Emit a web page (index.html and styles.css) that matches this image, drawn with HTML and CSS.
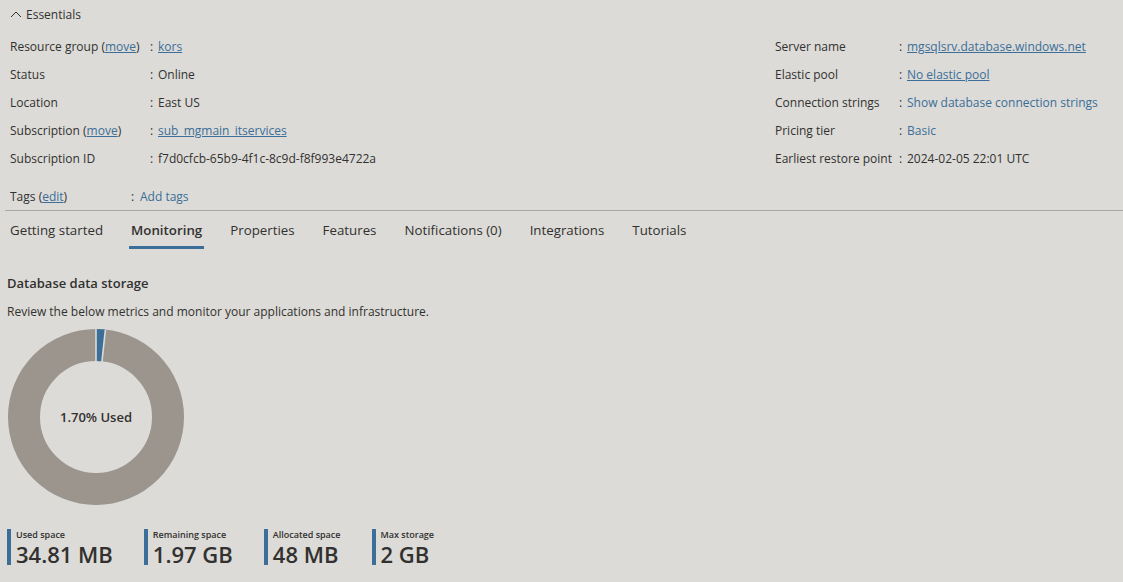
FILE: index.html
```html
<!DOCTYPE html>
<html>
<head>
<meta charset="utf-8">
<link rel="stylesheet" href="styles.css">
</head>
<body>
<div class="page">
  <div class="ess-head">
    <svg class="chev" width="12" height="8" viewBox="0 0 12 8"><path d="M1 7 L6 2 L11 7" fill="none" stroke="#323130" stroke-width="1"/></svg>
    <span>Essentials</span>
  </div>
  <div class="ess">
    <div class="col col-left">
      <div class="row"><div class="lbl">Resource group (<a href="#">move</a>)</div><div class="sep">:</div><div class="val"><a href="#">kors</a></div></div>
      <div class="row"><div class="lbl">Status</div><div class="sep">:</div><div class="val">Online</div></div>
      <div class="row"><div class="lbl">Location</div><div class="sep">:</div><div class="val">East US</div></div>
      <div class="row"><div class="lbl">Subscription (<a href="#">move</a>)</div><div class="sep">:</div><div class="val"><a href="#">sub_mgmain_itservices</a></div></div>
      <div class="row"><div class="lbl">Subscription ID</div><div class="sep">:</div><div class="val">f7d0cfcb-65b9-4f1c-8c9d-f8f993e4722a</div></div>
    </div>
    <div class="col col-right">
      <div class="row"><div class="lbl">Server name</div><div class="sep">:</div><div class="val"><a href="#">mgsqlsrv.database.windows.net</a></div></div>
      <div class="row"><div class="lbl">Elastic pool</div><div class="sep">:</div><div class="val"><a href="#">No elastic pool</a></div></div>
      <div class="row"><div class="lbl">Connection strings</div><div class="sep">:</div><div class="val"><a href="#" class="plain">Show database connection strings</a></div></div>
      <div class="row"><div class="lbl">Pricing tier</div><div class="sep">:</div><div class="val"><a href="#" class="plain">Basic</a></div></div>
      <div class="row"><div class="lbl">Earliest restore point</div><div class="sep">:</div><div class="val">2024-02-05 22:01 UTC</div></div>
    </div>
  </div>
  <div class="tags">
    <div class="lbl">Tags (<a href="#">edit</a>)</div><div class="sep">:</div><div class="val"><a href="#" class="plain">Add tags</a></div>
  </div>
  <div class="divider"></div>
  <nav class="tabs">
    <div class="tab">Getting started</div>
    <div class="tab active">Monitoring</div>
    <div class="tab">Properties</div>
    <div class="tab">Features</div>
    <div class="tab">Notifications (0)</div>
    <div class="tab">Integrations</div>
    <div class="tab">Tutorials</div>
  </nav>
  <section class="storage">
    <h2>Database data storage</h2>
    <p class="desc">Review the below metrics and monitor your applications and infrastructure.</p>
    <div class="donut">
      <svg width="178" height="178" viewBox="0 0 178 178">
        <circle cx="89" cy="89" r="72" fill="none" stroke="#9c958e" stroke-width="32"/>
        <circle cx="89" cy="89" r="72" fill="none" stroke="#3b6e98" stroke-width="32" stroke-dasharray="7.69 460" transform="rotate(-90 89 89)"/>
        <line x1="89" y1="1" x2="89" y2="33" stroke="#dcdbd7" stroke-width="1.6"/>
        <line x1="89" y1="89" x2="98.4" y2="1.5" stroke="#dcdbd7" stroke-width="1.6"/>
        <circle cx="89" cy="89" r="55" fill="#dcdbd7"/>
      </svg>
      <div class="donut-label">1.70% Used</div>
    </div>
    <div class="metrics">
      <div class="metric"><div class="m-lbl">Used space</div><div class="m-val">34.81 MB</div></div>
      <div class="metric"><div class="m-lbl">Remaining space</div><div class="m-val">1.97 GB</div></div>
      <div class="metric"><div class="m-lbl">Allocated space</div><div class="m-val">48 MB</div></div>
      <div class="metric"><div class="m-lbl">Max storage</div><div class="m-val">2 GB</div></div>
    </div>
  </section>
</div>
</body>
</html>
```
FILE: styles.css
```css
* { box-sizing: border-box; }
html, body { margin: 0; padding: 0; }
body {
  background: #dcdbd7;
  color: #323130;
  font-family: "Open Sans", "Noto Sans", sans-serif;
  font-size: 12px;
  width: 1123px;
  height: 582px;
  overflow: hidden;
}
a { color: #3b6e98; text-decoration: underline; }
a.plain { text-decoration: none; }
.ess-head {
  display: flex;
  align-items: center;
  gap: 4px;
  height: 20px;
  margin-top: 4px;
  padding-left: 10px;
}
.chev { margin-top: -1px; }
.ess {
  display: flex;
  padding-top: 8px;
}
.col { display: flex; flex-direction: column; }
.col-left { padding-left: 10px; width: 775px; }
.col-right { flex: 1; }
.row { display: flex; height: 28px; align-items: center; }
.col-left .lbl { width: 140px; }
.col-right .lbl { width: 124px; }
.sep { width: 8px; }
.tags {
  display: flex;
  align-items: center;
  height: 28px;
  padding-left: 10px;
  margin-top: 10px;
}
.tags .lbl { width: 121px; }
.tags .sep { width: 9px; }
.divider {
  height: 1px;
  background: #a9a7a3;
  margin-left: 5px;
}
.tabs {
  display: flex;
  padding-left: 10px;
  height: 38px;
  font-size: 13.3px;
}
.tab {
  margin-right: 28px;
  padding-top: 10px;
  position: relative;
}
.tab.active { font-weight: 600; }
.tab.active::after {
  content: "";
  position: absolute;
  left: -2px;
  right: -2px;
  bottom: 0;
  height: 3px;
  background: #3b6e98;
}
.storage { padding-left: 7px; padding-top: 25px; }
.storage h2 {
  font-size: 13px;
  font-weight: 600;
  margin: 0;
  line-height: 18px;
}
.desc { margin: 12px 0 0; line-height: 16px; }
.donut {
  position: relative;
  width: 178px;
  height: 178px;
  margin-top: 8px;
}
.donut svg { display: block; }
.donut-label {
  position: absolute;
  inset: 0;
  display: flex;
  align-items: center;
  justify-content: center;
  font-size: 13px;
  font-weight: 600;
}
.metrics {
  display: flex;
  gap: 31px;
  margin-top: 23px;
}
.metric {
  border-left: 4px solid #3b6e98;
  padding-left: 5px;
  height: 36px;
}
.m-lbl { font-size: 9px; line-height: 11px; font-weight: 600; }
.m-val { font-size: 22px; line-height: 24px; font-weight: 600; margin-top: 2px; }
```
